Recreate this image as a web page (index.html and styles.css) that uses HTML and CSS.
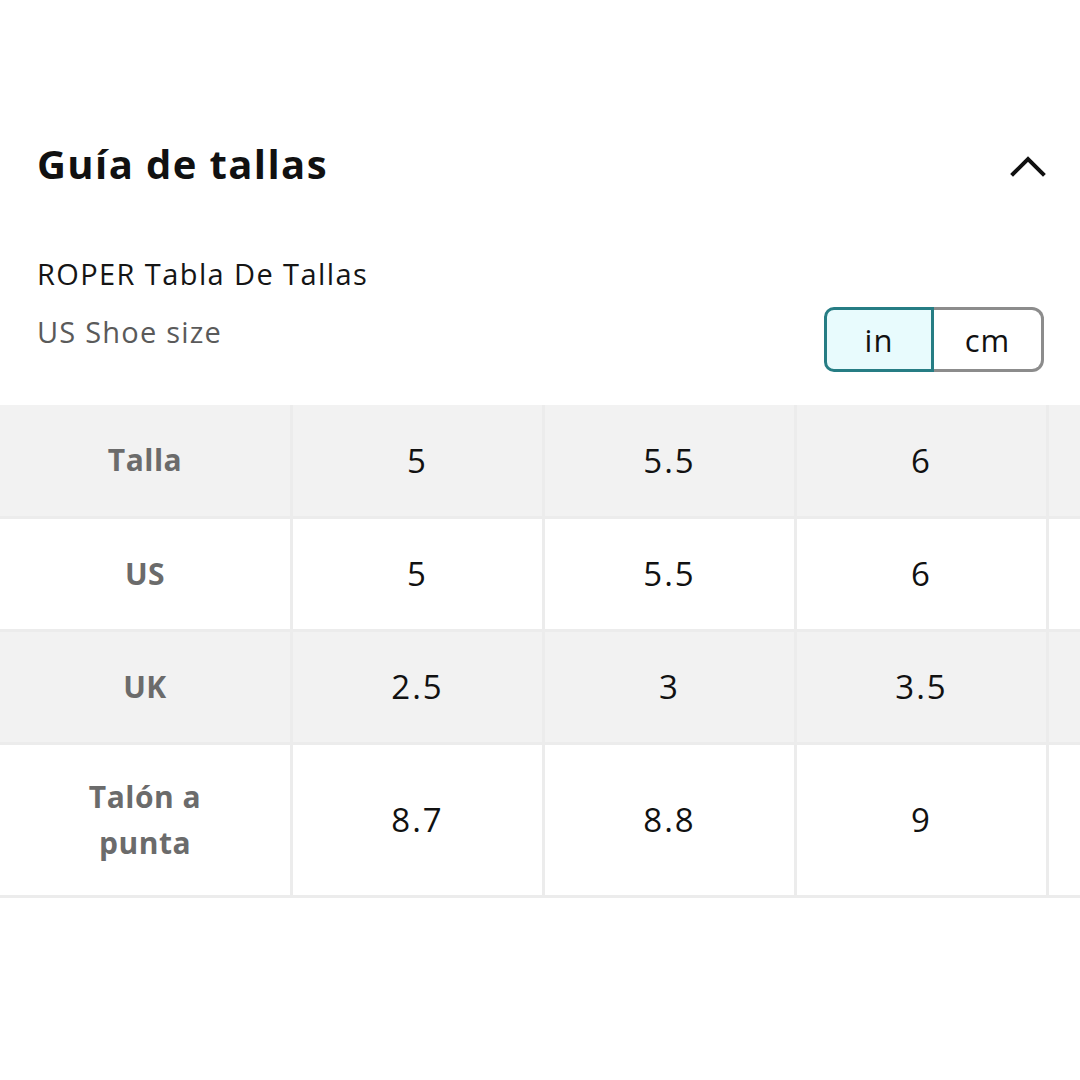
FILE: index.html
```html
<!DOCTYPE html>
<html lang="es">
<head>
<meta charset="utf-8">
<title>Guía de tallas</title>
<link rel="stylesheet" href="styles.css">
</head>
<body>
<div class="page">
  <div class="header">
    <h1 class="title">Guía de tallas</h1>
    <svg class="chevron" width="40" height="24" viewBox="0 0 40 24">
      <polyline points="4,20 19,5 34,20" fill="none" stroke="#111" stroke-width="4" stroke-linecap="square"/>
    </svg>
  </div>
  <div class="info">
    <div class="texts">
      <div class="brand">ROPER Tabla De Tallas</div>
      <div class="sub">US Shoe size</div>
    </div>
    <div class="toggle">
      <div class="seg active">in</div>
      <div class="seg">cm</div>
    </div>
  </div>
  <div class="table-wrap">
    <table class="sizes">
      <colgroup>
        <col class="c-label"><col class="c-val"><col class="c-val"><col class="c-val"><col class="c-val">
      </colgroup>
      <tr class="r1 shade"><th>Talla</th><td>5</td><td>5.5</td><td>6</td><td></td></tr>
      <tr class="r2"><th>US</th><td>5</td><td>5.5</td><td>6</td><td></td></tr>
      <tr class="r3 shade"><th>UK</th><td>2.5</td><td>3</td><td>3.5</td><td></td></tr>
      <tr class="r4"><th>Talón a<br>punta</th><td>8.7</td><td>8.8</td><td>9</td><td></td></tr>
    </table>
  </div>
</div>
</body>
</html>
```

FILE: styles.css
```css
html, body {
  margin: 0;
  padding: 0;
  background: #fff;
}
body {
  font-family: "Open Sans", "Noto Sans", sans-serif;
  color: #111;
}
.page {
  width: 1080px;
  height: 1080px;
  overflow: hidden;
}
.header {
  display: flex;
  align-items: center;
  justify-content: space-between;
  padding: 136px 31px 0 37px;
  height: 56px;
}
.title {
  margin: 0;
  font-size: 40px;
  font-weight: 700;
  letter-spacing: 1.4px;
  line-height: 56px;
  color: #111;
}
.chevron {
  display: block;
  margin-top: 4px;
}
.info {
  display: flex;
  justify-content: space-between;
  align-items: flex-start;
  padding: 62px 36px 0 37px;
}
.brand {
  font-size: 29px;
  line-height: 40px;
  letter-spacing: 1.4px;
  color: #151515;
}
.sub {
  font-size: 29px;
  line-height: 40px;
  letter-spacing: 1.2px;
  margin-top: 18px;
  color: #5a5a5a;
}
.toggle {
  display: flex;
  margin-top: 53px;
}
.seg {
  width: 104px;
  height: 59px;
  display: flex;
  align-items: center;
  justify-content: center;
  font-size: 31px;
  letter-spacing: 1px;
  color: #111;
  border: 3px solid #8c8c8c;
  background: #fff;
}
.seg.active {
  border-color: #267d84;
  background: #e8fbfd;
  border-radius: 10px 0 0 10px;
}
.seg:last-child {
  border-left: none;
  border-radius: 0 12px 12px 0;
  width: 107px;
}
.table-wrap {
  margin-top: 33px;
  width: 1080px;
  overflow: hidden;
}
.sizes {
  border-collapse: collapse;
  table-layout: fixed;
  width: 1300px;
  margin-left: -3px;
}
.c-label { width: 293px; }
.c-val { width: 252px; }
.sizes th, .sizes td {
  border: 3px solid #ececec;
  text-align: center;
  vertical-align: middle;
  padding: 0;
}
.sizes tr:first-child th, .sizes tr:first-child td { border-top: none; }
.sizes th {
  font-size: 30px;
  font-weight: 700;
  letter-spacing: 0.5px;
  color: #6b6b6b;
  line-height: 46px;
}
.sizes td {
  font-size: 33px;
  letter-spacing: 2px;
  color: #111;
}
.shade th, .shade td { background: #f2f2f2; }
.r1 { height: 112px; }
.r2 { height: 113px; }
.r3 { height: 113px; }
.r4 { height: 153px; }
```
